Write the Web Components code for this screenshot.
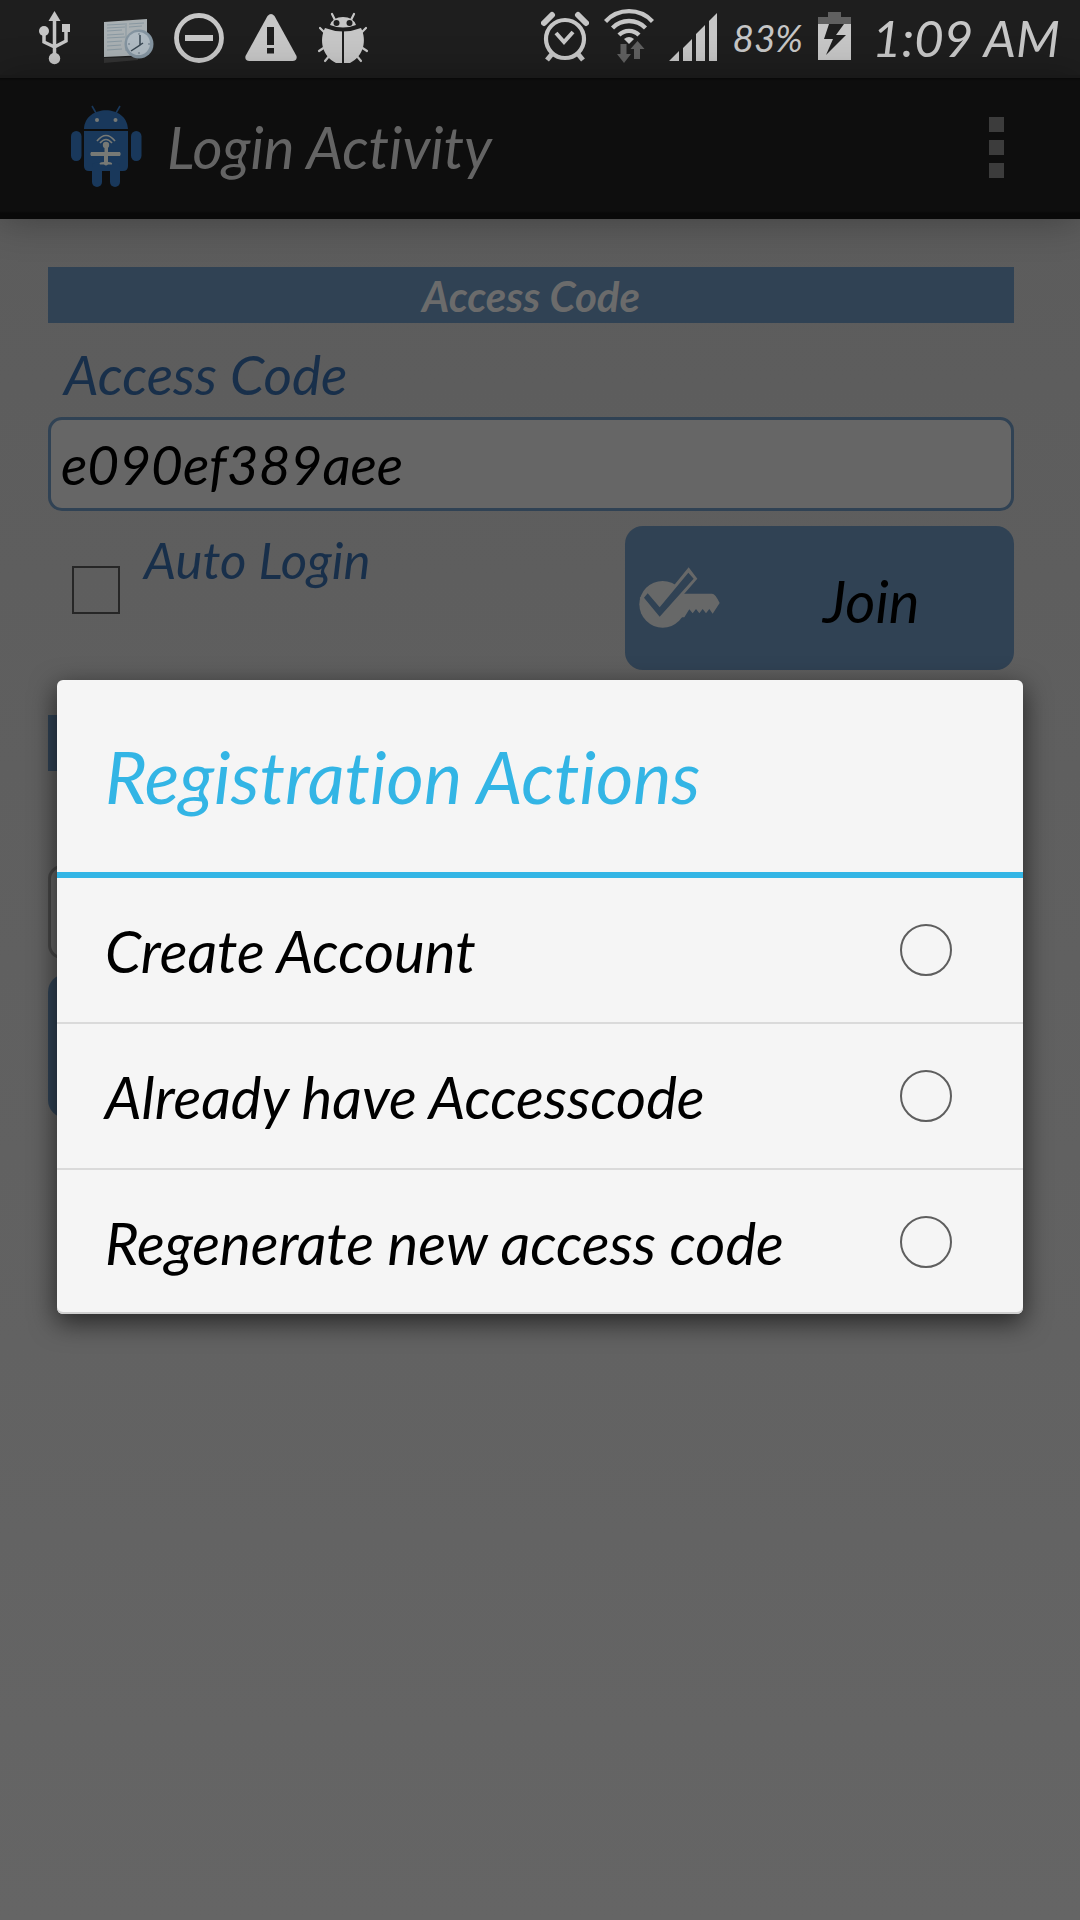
<!DOCTYPE html>
<html lang="en">
<head>
<meta charset="utf-8">
<meta name="viewport" content="width=device-width, initial-scale=1">
<title>Login Activity</title>
<style>
  html { height: 100%; }
  body {
    margin: 0; min-height: 100%; position: relative;
    font-family: Lato, "Open Sans", sans-serif; font-style: italic; font-variant-ligatures: none;
    background: linear-gradient(#5b5b5b, #656565);
    --steel: #304254; --navy: #182f4a; --muted: #646464; --accent: #33b5e5; --icon: #c6c6c6;
  }
</style>
</head>
<body>
<login-screen></login-screen>
<registration-dialog heading="Registration Actions"></registration-dialog>

<script>
const define = (name, html, setup) => customElements.define(name, class extends HTMLElement {
  connectedCallback() {
    if (this.shadowRoot) return;
    const root = this.attachShadow({ mode: 'open' });
    root.innerHTML = '<style>*{box-sizing:border-box}</style>' + html;
    if (setup) setup(this, root);
  }
});

define('status-bar', `
<style>
  :host { display: flex; justify-content: space-between; align-items: center; height: 75px; padding: 0 20px 0 19px; background: #1e1e1e; color: var(--icon); }
  div { display: flex; align-items: center; }
  svg { display: block; fill: var(--icon); }
  .right { gap: 15px; }
  .pct { font-size: 37px; }
  .time { font-size: 51px; line-height: 60px; padding-left: 6px; }
</style>
<div>
  <svg width="72" height="75" viewBox="0 0 72 75"><path d="M35.500 11l6 10h-12z"/><circle cx="35.500" cy="58.500" r="5.700"/><circle cx="25" cy="31" r="5"/><path d="M43 24h8v8h-8z"/><path d="M35.500 18v38M25 33v9l10.500 5M47 30v11l-11.500 6" fill="none" stroke="#c6c6c6" stroke-width="3.500"/></svg>
  <svg width="72" height="75" viewBox="0 0 72 75"><path d="M13 22l43-3v36l-43 2z" fill="#a9b0b3"/><path d="M16 25l18-1M16 28l18-1M16 31l15-1M16 35l17-1M16 38l18-1M16 42l15-1M16 46l14-1M16 50l15-1M38 24l15-1M38 27l13-1M35 23v28" stroke="#8998a1" fill="none"/><path d="M13 58l34-1v3l-34 3z" fill="#343434"/><circle cx="48" cy="44" r="14.500" fill="#8494a0"/><circle cx="47.500" cy="43.500" r="11.500" fill="#afbac2"/><path d="M49 35v10l-9 6M49 45l3-2" stroke="#374651" stroke-width="1.500" fill="none"/><path d="M48 33v2M48 52v2M37 44h2M57 44h2" stroke="#667783" fill="none"/></svg>
  <svg width="72" height="75" viewBox="0 0 72 75"><circle cx="36" cy="38" r="22.500" fill="none" stroke="#c6c6c6" stroke-width="4.800"/><path d="M22 35h28v6h-28z"/></svg>
  <svg width="72" height="75" viewBox="0 0 72 75"><path d="M32.500 16q3.500-4 7 0l22 40q1 5-4 5h-43q-5 0-4-5z"/><path d="M32 27h7v18h-7zM32 48h7v5.500h-7z" fill="#1e1e1e"/></svg>
  <svg width="72" height="75" viewBox="0 0 72 75"><path d="M18 28q18 7 36 0c6 12 3 28-11 35h-14c-14-7-17-23-11-35zM23 25q3-8 13-8t13 8q-13 5-26 0z"/><path d="M28 20l-3-6M44 20l3-6M18 33l-5-5M54 33l5-5M18 47l-6 4M54 47l6 4M23 55l-5 6M49 55l5 6" stroke="#c6c6c6" stroke-width="2.200" stroke-linecap="round"/><path d="M36 29v34" stroke="#1e1e1e" stroke-width="2"/><circle cx="29.500" cy="23" r="3" fill="#1e1e1e"/><circle cx="42.500" cy="23" r="3" fill="#1e1e1e"/></svg>
</div>
<div class="right">
  <svg width="48" height="75" viewBox="0 0 48 75"><g fill="none" stroke="#c6c6c6"><circle cx="24" cy="39" r="19" stroke-width="4.200"/><path d="M15 33l8 9 9-10" stroke-width="4"/><path d="M3 23l8-8M37 15l8 8" stroke-width="6" stroke-linecap="round"/><path d="M11 54l-5 6M37 54l5 6" stroke-width="5"/></g></svg>
  <svg width="50" height="75" viewBox="0 0 50 75"><g fill="none" stroke="#c6c6c6" stroke-width="4.300"><path d="M1.500 21.500a32 32 0 0 1 47 0M8.500 28a23 23 0 0 1 33 0M15 35a14 14 0 0 1 20 0"/></g><path d="M20 39q5-4 10 0l-5 5z"/><path d="M16.500 44h6v10h4.500l-7 9-7-9h3.500zM30 59h6V49h4.500l-7-8-7 8h3.500z" fill="#606060"/></svg>
  <svg width="48" height="75" viewBox="0 0 48 75"><path d="M0 61l10-10v10zM14 61V48l9-9v22zM27 61V34l9-9v36zM40 61V21l8-8v48z"/></svg>
  <span class="pct">83%</span>
  <svg width="33" height="75" viewBox="0 0 33 75"><path d="M0 17h10v-5h13v5h10v8H0z" fill="#606060"/><path d="M0 24h33v36H0z"/><path d="M11 24h15l-8 11h10L8 55l7-16H6z" fill="#1e1e1e"/></svg>
  <span class="time">1:09 AM</span>
</div>`);

define('action-bar', `
<style>
  :host { display: flex; align-items: center; height: 144px; padding: 0 76px 0 70px; background: linear-gradient(#191919 3px, #080808 3px, #0e0e0e 6px, #0e0e0e 136px, #090909 138px); color: var(--muted); box-shadow: 0 2px 36px rgba(0,0,0,.3); position: relative; }
  h1 { flex: 1; margin: 0; padding-left: 24px; font-size: 58px; line-height: 64px; font-weight: 400; }
  button { display: flex; flex-direction: column; gap: 8px; padding: 0; border: 0; background: none; }
  i { width: 15px; height: 15px; background: #3c3c3c; }
</style>
<svg width="73" height="90" viewBox="70 102 73 90"><g fill="#19385b"><path d="M84 129c1-25 43-25 44 0zM84 131h44v35q0 5-5 5h-34q-5 0-5-5z"/><rect x="71" y="131" width="10.500" height="30" rx="5.200"/><rect x="131" y="131" width="10.500" height="30" rx="5.200"/><rect x="92" y="162" width="10" height="25" rx="5"/><rect x="110" y="162" width="10" height="25" rx="5"/><path d="M96 113l-4-7M116 113l4-7" stroke="#19385b" stroke-width="1.600"/></g><g fill="#777975"><circle cx="97" cy="120" r="2"/><circle cx="115.500" cy="120" r="2"/><circle cx="106" cy="145" r="3.200"/><path d="M104.500 145h3.500v7h12q1.500 2 0 4h-12v6q5 0 4 2.500h-4q-2 2-4 0h-4q-2-2.500 4-2.500v-6h-13q-1.500-2 0-4h13.500z"/></g><path d="M97 141q9-11 18 0M100 143q6-7 12 0" fill="none" stroke="#777975" stroke-width="1.700"/></svg>
<h1>Login Activity</h1>
<button aria-label="More options"><i></i><i></i><i></i></button>`);

define('section-title', `
<style>
  :host { display: block; height: 56px; background: var(--steel); color: #6b6b6b; }
  h2 { margin: 0; font-size: 42px; line-height: 58px; font-weight: 700; text-align: center; }
</style>
<h2><slot></slot></h2>`);

define('code-field', `
<style>
  :host { display: block; --line: var(--steel); }
  label { display: block; height: 94px; padding: 8px 16px 0; font-size: 55px; line-height: 86px; color: var(--navy); }
  input { display: block; width: 100%; height: 94px; padding: 0 10px; border: 3px solid var(--line); border-radius: 14px; background: #666; color: #000; font: inherit; font-size: 55px; outline: 0; }
  :host([plain]) { --line: #474747; }
</style>
<label for="code"><slot></slot></label>
<input id="code" type="text">`, (host, root) => {
  root.querySelector('input').value = host.getAttribute('value') || '';
});

define('action-button', `
<style>
  :host { display: block; }
  button { display: flex; align-items: center; width: 100%; height: 144px; padding: 0 0 0 14px; border: 0; border-radius: 18px; background: var(--steel); color: #000; font: inherit; font-size: 58px; line-height: 64px; }
  span { flex: 1; padding: 6px 0 0 8px; text-align: center; }
</style>
<button><slot name="icon"></slot><span><slot></slot></span></button>`);

define('check-option', `
<style>
  :host { display: flex; gap: 24px; padding-left: 24px; }
  input { appearance: none; width: 48px; height: 48px; margin: 40px 0 0; border: 2px solid #262626; }
  label { font-size: 51px; line-height: 68px; color: var(--navy); }
</style>
<input id="box" type="checkbox"><label for="box"><slot></slot></label>`);

define('login-screen', `
<style>
  :host { display: block; }
  main { padding: 48px 66px 48px 48px; }
  .row { display: grid; grid-template-columns: 13fr 9fr; gap: 14px; margin: 15px 0 45px; }
  main > action-button { margin-top: 15px; }
</style>
<status-bar></status-bar>
<action-bar></action-bar>
<main>
  <section-title>Access Code</section-title>
  <code-field value="e090ef389aee">Access Code</code-field>
  <div class="row">
    <check-option>Auto Login</check-option>
    <action-button>
      <svg slot="icon" width="82" height="64" viewBox="114 172 246 192"><g fill="#676868"><circle cx="185" cy="287" r="70"/><path d="M225 255h108q10 0 23 28l-21 32-10-14-10 13-10-13-10 13-10-13-10 13-10-12-15 24h-25z"/><path d="M116 268l24-25 36 40 87-107 26 34-113 130z"/></g><path d="M129 267l11-13 36 42 86-104 16 18-102 114z" fill="#304254"/></svg>Join</action-button>
  </div>
  <section-title></section-title>
  <code-field plain></code-field>
  <action-button></action-button>
</main>`);

define('registration-dialog', `
<style>
  :host { position: absolute; inset: 74px 0 0; display: flex; align-items: center; justify-content: center; }
  section { width: calc(100% - 114px); border-radius: 6px; background: #f5f5f5; box-shadow: 0 8px 26px 1px rgba(0,0,0,.6), inset 0 -2px #cfcfcf; overflow: hidden; }
  h2 { margin: 0; height: 198px; padding: 0 48px; border-bottom: 6px solid var(--accent); font-size: 72px; line-height: 192px; font-weight: 400; color: var(--accent); }
  label { display: flex; align-items: center; justify-content: space-between; height: 146px; padding: 0 71px 0 48px; border-bottom: 2px solid #dadada; font-size: 58px; color: #000; }
  label:last-child { height: 144px; border: 0; }
  input { appearance: none; width: 52px; height: 52px; margin: 0; border: 2px solid #5e5e5e; border-radius: 50%; }
</style>
<section role="dialog" aria-labelledby="heading"><h2 id="heading"></h2><div></div></section>`, (host, root) => {
  root.querySelector('h2').textContent = host.getAttribute('heading');
  root.querySelector('div').innerHTML = ['Create Account', 'Already have Accesscode', 'Regenerate new access code']
    .map((text, n) => `<label for="choice${n}"><span>${text}</span><input type="radio" name="choice" id="choice${n}"></label>`).join('');
});
</script>
</body>
</html>
